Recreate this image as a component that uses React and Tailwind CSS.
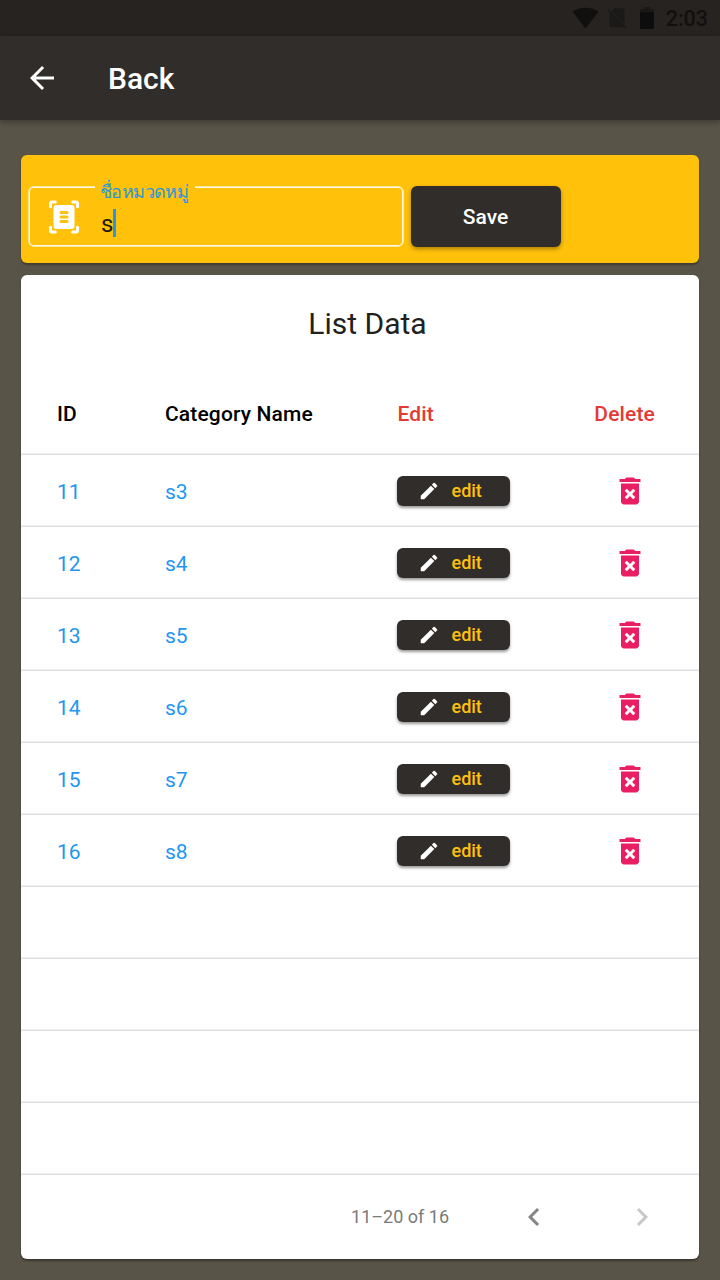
import React from "react";
import { MdArrowBack, MdChevronLeft, MdChevronRight, MdDeleteForever, MdEdit } from "react-icons/md";

const rows = [
  { id: 11, name: "s3" },
  { id: 12, name: "s4" },
  { id: 13, name: "s5" },
  { id: 14, name: "s6" },
  { id: 15, name: "s7" },
  { id: 16, name: "s8" },
];

const grid = "grid grid-cols-[108px_232px_175.5px_1fr] items-center pl-9 pr-[27px]";
const line = "border-b border-[#dedede] shadow-[inset_0_-1px_0_#efefef]";

function StatusBar() {
  return (
    <div className="flex h-9 items-center justify-end bg-[#272320] pr-3 text-[#11100f]">
      <svg className="h-[22px] w-[27px]" viewBox="0 0 27 22">
        <path d="M13.5 21.5L.5 4.7C4 2.1 8.500 .7 13.500 .7s9.500 1.400 13 4z" fill="currentColor" />
      </svg>
      <svg className="ml-[8px] h-[22px] w-[20px]" viewBox="0 0 20 22">
        <path d="M7.300 1.200H15.500Q17.500 1.200 17.500 3.200V17.300L4.800 4z" fill="#1b1918" />
        <path d="M2.500 5.500L17 20.300H4.500Q2.500 20.300 2.500 18.300z" fill="#1b1918" />
        <path d="M.8 2.500L19 21" stroke="#1b1918" strokeWidth="1.700" />
      </svg>
      <svg className="ml-[13px] h-[22px] w-[14px]" viewBox="0 0 14 22">
        <path d="M0 5V3.500Q0 2 1.500 2H4V0H10V2H12.500Q14 2 14 3.500V5z" fill="#1b1918" />
        <path d="M0 5H14V20.500Q14 22 12.500 22H1.500Q0 22 0 20.500z" fill="#0e0d0e" />
      </svg>
      <span className="ml-[11.5px] pt-[2px] text-[21.5px] leading-6 font-medium">2:03</span>
    </div>
  );
}

function ScannerIcon() {
  return (
    <svg className="size-9 text-white" viewBox="0 0 24 24">
      <path
        d="M6.200 2H4Q3 2 3 3V5.200M17.800 2H20Q21 2 21 3V5.200M6.200 22H4Q3 22 3 21V18.800M17.800 22H20Q21 22 21 21V18.800"
        fill="none"
        stroke="currentColor"
        strokeWidth="2"
        strokeLinecap="round"
      />
      <rect x="5" y="4" width="14" height="16" rx="2" fill="currentColor" />
      <path d="M10 9H14M10 12H14M10 15H14" stroke="#ffc10a" strokeWidth="2" strokeLinecap="round" />
    </svg>
  );
}

function CategoryForm() {
  return (
    <section className="flex h-[108px] items-start rounded-[6px] bg-[#ffc10a] pt-[31px] pl-[7px] shadow-[0_2px_2px_rgba(0,0,0,0.3)]">
      <div className="relative flex h-[61px] w-[376px] items-center rounded-[6px] border border-white/60 pl-[17px] shadow-[inset_0_0_0_1px_rgba(255,255,255,0.9)]">
        <ScannerIcon />
        <span className="ml-[19px] pt-[14px] text-2xl leading-7 text-[#211b0b]">s</span>
        <span className="mt-[13px] h-7 w-[3px] bg-[#2196f3]" />
        <label className="absolute -top-[11px] left-[66px] flex h-[30px] w-[100px] items-center bg-[#ffc10a] pl-[5px] text-[18px] tracking-[-0.6px] whitespace-nowrap text-[#2b96dc]">
          ชื่อหมวดหมู่
        </label>
      </div>
      <button className="ml-[7px] h-[61px] w-[150px] rounded-[6px] bg-[#312d2a] pt-[2px] pr-px text-[21px] font-medium text-white shadow-[0_2px_4px_rgba(0,0,0,0.35)]">
        Save
      </button>
    </section>
  );
}

function DataTable() {
  return (
    <section className="mt-3 h-[984px] rounded-[6px] bg-white shadow-[0_2px_2px_rgba(0,0,0,0.35)]">
      <h2 className="flex h-24 items-center justify-center pl-[15px] text-[30px] text-[#212121]">List Data</h2>
      <div className={`${grid} ${line} h-[84px] pt-[5px] text-[21px] font-medium tracking-[0.15px] text-black`}>
        <span>ID</span>
        <span>Category Name</span>
        <span className="pl-[0.5px] text-[#e53935]">Edit</span>
        <span className="pr-[17px] text-right text-[#e53935]">Delete</span>
      </div>
      {rows.map((row) => (
        <div key={row.id} className={`${grid} ${line} h-[72px] text-[21px] text-[#2196f3]`}>
          <span className="pt-[5px]">{row.id}</span>
          <span className="pt-[5px]">{row.name}</span>
          <button className="flex h-[30px] w-[113px] items-center rounded-[6px] bg-[#312d2a] pl-[21px] text-[18px] font-medium text-[#ffc10a] shadow-[0_2px_3px_rgba(0,0,0,0.4)]">
            <MdEdit className="size-[22px] text-white" />
            <span className="ml-[11.5px]">edit</span>
          </button>
          <span className="flex justify-end pr-6">
            <MdDeleteForever className="size-9 text-[#e91e63]" />
          </span>
        </div>
      ))}
      {[0, 1, 2, 3].map((i) => (
        <div key={i} className={`${line} h-[72px]`} />
      ))}
      <footer className="flex h-[84px] items-center justify-end pr-[39px] text-[#858585]">
        <span className="pb-[2px] text-[18px] text-[#7a7a7a]">11–20 of 16</span>
        <MdChevronLeft className="ml-[67px] size-9" />
        <MdChevronRight className="ml-[72px] size-9 text-[#c8c8c8]" />
      </footer>
    </section>
  );
}

export default function App() {
  return (
    <div className="h-[1280px] w-[720px] overflow-hidden bg-[#595448] font-['Roboto','Noto_Sans',sans-serif]">
      <StatusBar />
      <header className="flex h-[84px] items-center bg-[#312d2a] pl-6 text-white shadow-[0_2px_6px_rgba(0,0,0,0.35)]">
        <MdArrowBack className="size-9" />
        <h1 className="ml-12 pt-[1px] text-[30px] font-medium">Back</h1>
      </header>
      <main className="px-[21px] pt-[35px]">
        <CategoryForm />
        <DataTable />
      </main>
    </div>
  );
}
